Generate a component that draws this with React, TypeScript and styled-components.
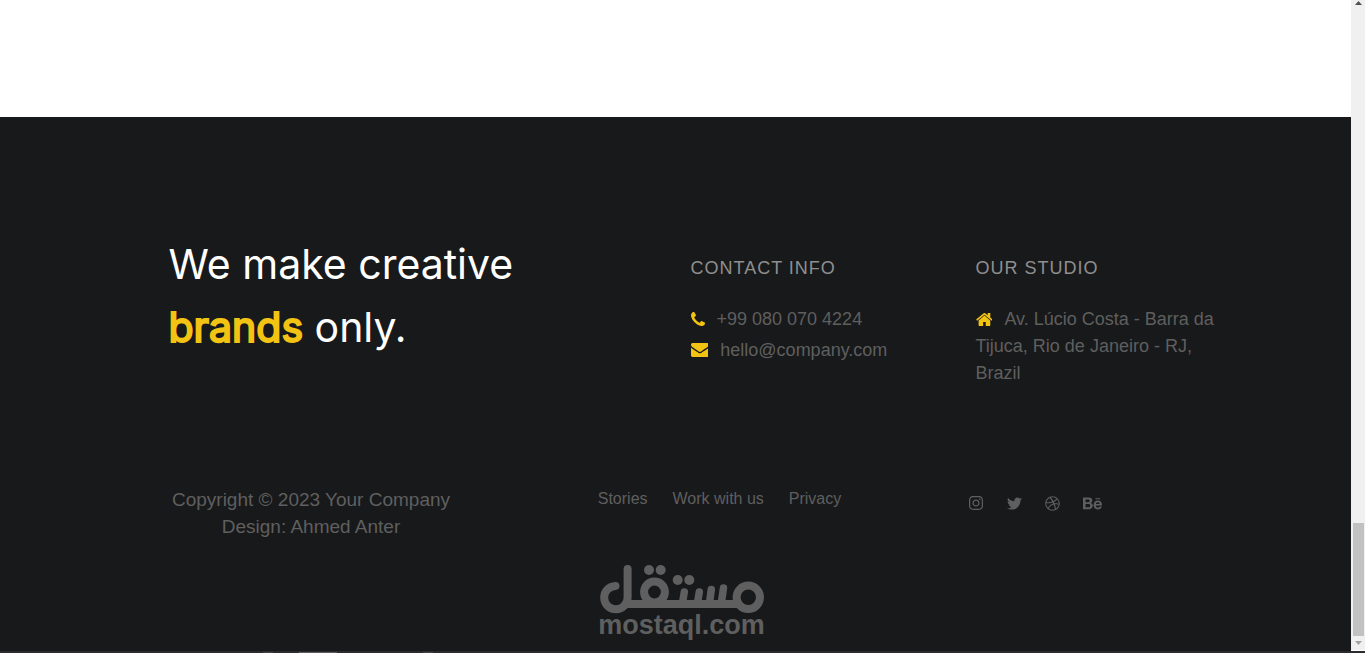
import React from 'react';
import styled, { createGlobalStyle } from 'styled-components';
import { FaBehance, FaDribbble, FaInstagram, FaTwitter } from 'react-icons/fa';

const GlobalStyle = createGlobalStyle`
  * { box-sizing: border-box; }
  body {
    margin: 0;
    background: #ffffff;
    font-family: "Liberation Sans", Arial, sans-serif;
    font-size: 18px;
    line-height: 27px;
    color: #5f5f5f;
  }
`;

const Screen = styled.div`
  min-height: 100vh;
  display: flex;
  flex-direction: column;
`;

const Viewport = styled.div`
  flex: 1;
  display: flex;
`;

const Page = styled.div`
  flex: 1;
  min-width: 0;
  display: flex;
  flex-direction: column;
`;

const Main = styled.main`
  flex: 1;
  background: #ffffff;
`;

const Footer = styled.footer`
  background: #18191b;
  padding: 116px 0 13px;
`;

const Container = styled.div`
  max-width: 1140px;
  margin: 0 auto;
`;

const TopRow = styled.div`
  display: grid;
  grid-template-columns: 2fr 1fr 1fr;
`;

const Tagline = styled.h2`
  margin: 0;
  padding-left: 63px;
  font-family: Inter, "Liberation Sans", sans-serif;
  font-size: 41px;
  font-weight: 400;
  line-height: 63px;
  color: #ffffff;
`;

const Accent = styled.strong`
  font-weight: 400;
  color: #f3c313;
  -webkit-text-stroke: 2px #f3c313;
`;

const InfoColumn = styled.section`
  padding: 22px 15px 0;
`;

const InfoTitle = styled.h3`
  margin: 0 0 24px;
  font-size: 18px;
  font-weight: 400;
  letter-spacing: 1px;
  text-transform: uppercase;
  color: #8f8f8f;
`;

const InfoList = styled.address`
  display: flex;
  flex-direction: column;
  gap: 4px;
  font-style: normal;
`;

const InfoLink = styled.a`
  color: inherit;
  text-decoration: none;
`;

const InfoIcon = styled.svg<{ $height?: number }>`
  height: ${({ $height = 14 }) => $height}px;
  margin-right: 12px;
  vertical-align: -1px;
  fill: #f3c313;
`;

const BottomRow = styled.div`
  display: grid;
  grid-template-columns: 285px 1fr 278px;
  padding: 99px 0 24px 63px;
`;

const Copyright = styled.p`
  margin: 0;
  font-size: 19px;
  text-align: center;
`;

const LinkBar = styled.nav`
  display: flex;
  justify-content: center;
  gap: 25px;
  padding-left: 18px;
  font-size: 16px;
  line-height: 26px;
`;

const FooterLink = styled.a`
  color: inherit;
  text-decoration: none;
`;

const SocialBar = styled.nav`
  display: flex;
  align-items: center;
  align-self: start;
  gap: 23px;
  height: 34px;
`;

const SocialLink = styled.a<{ $size?: number }>`
  display: flex;
  color: inherit;

  svg {
    width: ${({ $size = 15 }) => $size}px;
    height: ${({ $size = 15 }) => $size}px;
  }
`;

const Brand = styled.div`
  display: flex;
  flex-direction: column;
  align-items: center;
  padding-left: 12px;
  color: #5f5f5f;
`;

const BrandMark = styled.svg`
  width: 164px;
  height: 48px;
  overflow: visible;
`;

const BrandName = styled.span`
  font-size: 27px;
  font-weight: 700;
  line-height: 26px;
`;

const ScrollTrack = styled.div`
  width: 14px;
  margin-bottom: 1px;
  padding: 0 1px 0 2px;
  background: #f0f0f0;
  display: flex;
  flex-direction: column;
  justify-content: flex-end;
`;

const ScrollArrow = styled.svg`
  width: 11px;
  height: 14px;
  flex: none;
`;

const ScrollThumb = styled.div`
  height: 113px;
  margin-top: auto;
  background: #c1c1c1;
`;

const Edge = styled.div`
  height: 2px;
  background:
    linear-gradient(#5a5a5a, #5a5a5a) 299px 1px / 38px 1px no-repeat,
    linear-gradient(#444444, #444444) 263px 1px / 10px 1px no-repeat,
    linear-gradient(#444444, #444444) 423px 1px / 10px 1px no-repeat,
    #2c2a2c;
`;

const PhoneIcon = () => (
  <InfoIcon viewBox="192 128 1408 1408" aria-hidden="true">
    <path d="M1600 1240q0 27-10 70.500t-21 68.500q-21 50-122 106-94 51-186 51-27 0-53-3.500t-57.500-12.500-47-14.500-55.500-20.500-49-18q-98-35-175-83-127-79-264-216t-216-264q-48-77-83-175-3-9-18-49t-20.500-55.500-14.500-47-12.500-57.500-3.500-53q0-92 51-186 56-101 106-122 25-11 68.500-21t70.500-10q14 0 21 3 18 6 53 76 11 19 30 54t35 63.500 31 53.500q3 4 17.500 25t21.500 35.500 7 28.500q0 20-28.500 50t-62 55-62 53-28.500 46q0 9 5 22.500t8.500 20.500 14 24 11.500 19q76 137 174 235t235 174q2 1 19 11.500t24 14 20.500 8.500 22.500 5q18 0 46-28.500t53-62 55-62 50-28.500q14 0 28.500 7t35.500 21.500 25 17.500q25 15 53.500 31t63.500 35 54 30q70 35 76 53 3 7 3 21z" />
  </InfoIcon>
);

const EnvelopeIcon = () => (
  <InfoIcon viewBox="0 256 1792 1408" aria-hidden="true">
    <path d="M1792 710v794q0 66-47 113t-113 47h-1472q-66 0-113-47t-47-113v-794q44 49 101 87 362 246 497 345 57 42 92.500 65.500t94.500 48 110 24.500h2q51 0 110-24.500t94.500-48 92.500-65.500q170-123 498-345 57-39 100-87zm0-294q0 79-49 151t-122 123q-376 261-468 325-10 7-42.500 31t-54 38.500-52 32.500-57.500 27-50 9h-2q-23 0-50-9t-57.500-27-52-32.500-54-38.500-42.500-31q-91-64-262-182.500t-205-142.500q-62-42-117-115.500t-55-136.500q0-78 41.500-130t118.500-52h1472q65 0 112.500 47t47.500 113z" />
  </InfoIcon>
);

const HomeIcon = () => (
  <InfoIcon viewBox="64 256 1664 1280" $height={13} aria-hidden="true">
    <path d="M1472 992v480q0 26-19 45t-45 19h-384v-384h-256v384h-384q-26 0-45-19t-19-45v-480q0-1 .5-3t.5-3l575-474 575 474q1 2 1 6zm223-69l-62 74q-8 9-21 11h-3q-13 0-21-7l-692-577-692 577q-12 8-24 7-13-2-21-11l-62-74q-8-10-7-23.500t11-21.500l719-599q32-26 76-26t76 26l244 204v-195q0-14 9-23t23-9h192q14 0 23 9t9 23v408l219 182q10 8 11 21.500t-7 23.500z" />
  </InfoIcon>
);

export default function App() {
  return (
    <Screen>
      <GlobalStyle />
      <Viewport>
        <Page>
          <Main />
          <Footer>
            <Container>
              <TopRow>
                <Tagline>
                  We make creative
                  <br />
                  <Accent>brands</Accent> only.
                </Tagline>
                <InfoColumn>
                  <InfoTitle>Contact Info</InfoTitle>
                  <InfoList>
                    <InfoLink href="tel:+990800704224"><PhoneIcon />+99 080 070 4224</InfoLink>
                    <InfoLink href="mailto:hello@company.com"><EnvelopeIcon />hello@company.com</InfoLink>
                  </InfoList>
                </InfoColumn>
                <InfoColumn>
                  <InfoTitle>Our Studio</InfoTitle>
                  <InfoList>
                    <InfoLink href="#studio"><HomeIcon />Av. Lúcio Costa - Barra da Tijuca, Rio de Janeiro - RJ, Brazil</InfoLink>
                  </InfoList>
                </InfoColumn>
              </TopRow>
              <BottomRow>
                <Copyright>
                  Copyright © 2023 Your Company
                  <br />
                  Design: Ahmed Anter
                </Copyright>
                <LinkBar aria-label="Footer">
                  <FooterLink href="#stories">Stories</FooterLink>
                  <FooterLink href="#work">Work with us</FooterLink>
                  <FooterLink href="#privacy">Privacy</FooterLink>
                </LinkBar>
                <SocialBar aria-label="Social">
                  <SocialLink href="#instagram" aria-label="Instagram" $size={16}><FaInstagram /></SocialLink>
                  <SocialLink href="#twitter" aria-label="Twitter"><FaTwitter /></SocialLink>
                  <SocialLink href="#dribbble" aria-label="Dribbble"><FaDribbble /></SocialLink>
                  <SocialLink href="#behance" aria-label="Behance" $size={19}><FaBehance /></SocialLink>
                </SocialBar>
              </BottomRow>
            </Container>
            <Brand>
              <BrandMark viewBox="0 0 164 48" role="img" aria-label="مستقل">
                <g fill="none" stroke="currentColor" strokeWidth="8" strokeLinecap="round" strokeLinejoin="round">
                  <circle cx="148.300" cy="33.300" r="11.700" />
                  <circle cx="54.500" cy="28" r="10.400" />
                  <path d="M15.500 21.900A11.700 11.700 0 1 0 27.600 33.500V5" />
                  <path d="M25 40H141" strokeLinecap="butt" />
                  <path d="M84.300 28L82.500 39M99.300 28L97.500 39M111.300 25.500L109.500 39M123.500 24L121.300 39" strokeWidth="7.500" />
                </g>
                <g fill="currentColor">
                  <circle cx="49" cy="6" r="5" />
                  <circle cx="60.700" cy="6" r="5" />
                  <circle cx="77.700" cy="16" r="5" />
                  <circle cx="89.300" cy="16" r="5" />
                </g>
              </BrandMark>
              <BrandName>mostaql.com</BrandName>
            </Brand>
          </Footer>
        </Page>
        <ScrollTrack aria-hidden="true">
          <ScrollArrow viewBox="0 0 11 14"><path d="M2 5L5.500 1L9 5Z" fill="#505050" /></ScrollArrow>
          <ScrollThumb />
          <ScrollArrow viewBox="0 0 11 14"><path d="M2 5L5.500 9L9 5Z" fill="#a3a3a3" /></ScrollArrow>
        </ScrollTrack>
      </Viewport>
      <Edge />
    </Screen>
  );
}
